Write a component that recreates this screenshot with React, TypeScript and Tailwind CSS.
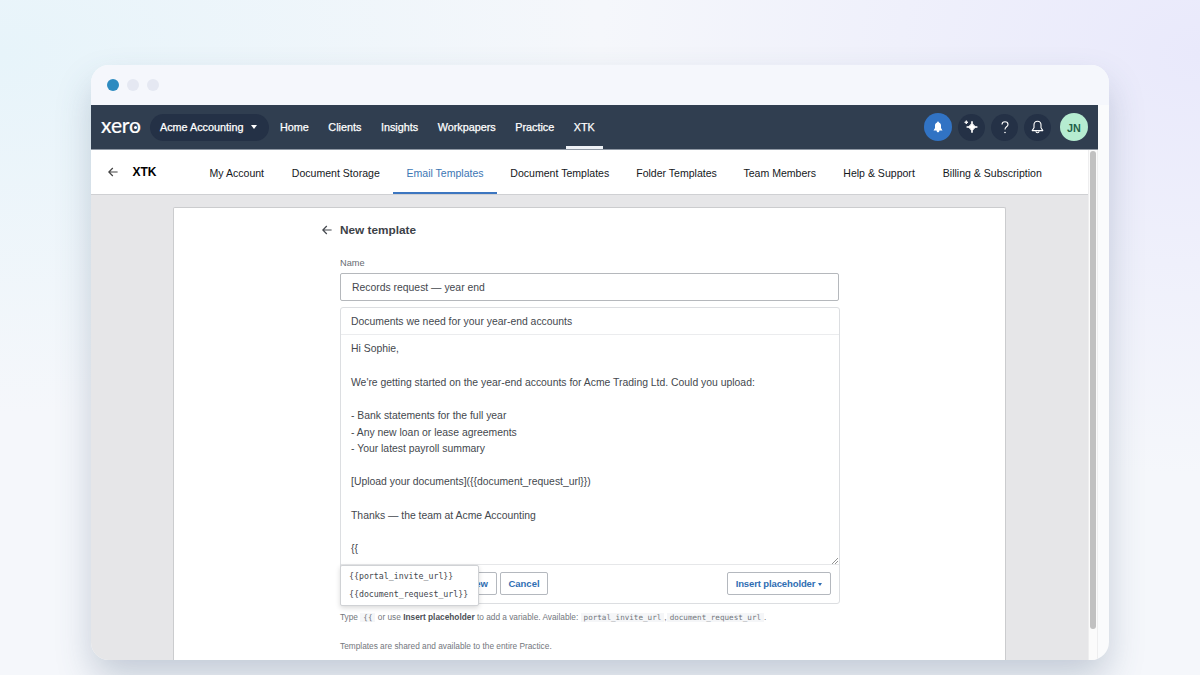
import React from "react";
import clsx from "clsx";

const navItems = ["Home", "Clients", "Insights", "Workpapers", "Practice", "XTK"];

const tabs = [
  { label: "My Account", width: "w-[83px]" },
  { label: "Document Storage", width: "w-[115px]" },
  { label: "Email Templates", width: "w-[103.5px]", active: true },
  { label: "Document Templates", width: "w-[126px]" },
  { label: "Folder Templates", width: "w-[107.5px]" },
  { label: "Team Members", width: "w-[99px]" },
  { label: "Help & Support", width: "w-[99.5px]" },
  { label: "Billing & Subscription", width: "w-[127px]" },
];

const body = `Hi Sophie,

We're getting started on the year-end accounts for Acme Trading Ltd. Could you upload:

- Bank statements for the full year
- Any new loan or lease agreements
- Your latest payroll summary

[Upload your documents]({{document_request_url}})

Thanks — the team at Acme Accounting

{{`;

const BackArrow = ({ className }: { className?: string }) => (
  <svg
    viewBox="0 0 10 10"
    className={clsx("h-[10px] w-[10px] fill-none stroke-current", className)}
  >
    <path d="M9.6 5H1M4.8 1L0.8 5l4 4" strokeWidth="1.2" />
  </svg>
);

const TopBar = () => {
  return (
    <header className="flex h-[45px] items-center border-b border-[#8f98a4] bg-[#303e50] pr-[10px] pl-[10px] text-[10.8px] text-white">
      <div className="relative w-[40px] font-['Lato'] text-[21px] leading-[24px] tracking-[-0.1px]">
        <span className="relative -top-[2.5px] inline-block [-webkit-text-stroke:0.2px_white]">
          xero
        </span>
        <span className="absolute top-[11px] left-[33px] h-[2.5px] w-[2.5px] rounded-full bg-white" />
      </div>

      <div className="ml-[9px] flex h-[27px] w-[119px] items-center gap-[8px] rounded-full bg-[#243146] pl-[10px] [-webkit-text-stroke:0.25px]">
        <span>Acme Accounting</span>
        <span className="h-0 w-0 border-x-[3.5px] border-t-[4px] border-x-transparent border-t-white" />
      </div>

      <nav className="ml-[3px] flex h-full">
        {navItems.map((item) => (
          <a
            key={item}
            className={clsx(
              "mr-[3.55px] flex h-[44px] items-center border-b-[3px] px-[8px] pt-[3px] [-webkit-text-stroke:0.25px]",
              item === "XTK" ? "border-[#eef1f6]" : "border-transparent"
            )}
          >
            {item}
          </a>
        ))}
      </nav>

      {/* Actions */}
      <div className="ml-auto flex items-center gap-[6px]">
        <span className="flex h-[28px] w-[28px] items-center justify-center rounded-full bg-[#3173c4]">
          <svg viewBox="0 0 12 12" className="h-[12px] w-[12px] fill-white">
            <path d="M6 0.5c.6 0 .9.4.9.9C8.4 1.9 9 3 9 4.5v2.6l1.5 2.3H1.5L3 7.1V4.5C3 3 3.6 1.9 5.1 1.4c0-.5.3-.9.9-.9zM4.6 9.4h2.8c0 1.2-.5 1.8-1.4 1.8s-1.4-.6-1.4-1.8z" />
          </svg>
        </span>
        <span className="flex h-[27px] w-[27px] items-center justify-center rounded-full bg-[#243146] pr-[2px]">
          <svg
            viewBox="0 0 14 14"
            className="h-[14px] w-[14px] fill-white stroke-white"
          >
            <path
              d="M8 1.2Q8.6 6.4 13.4 7 8.6 7.6 8 12.8 7.4 7.6 2.6 7 7.4 6.4 8 1.2z"
              strokeWidth="0.9"
            />
            <path
              d="M2.3.6l.5 1.2 1.2.5-1.2.5-.5 1.2-.5-1.2L.6 2.3l1.2-.5z"
              strokeWidth="0.8"
            />
          </svg>
        </span>
        <span className="flex h-[27px] w-[27px] items-center justify-center rounded-full bg-[#243146]">
          <svg viewBox="0 0 8 13" className="h-[13px] w-[8px] fill-none stroke-white">
            <path
              d="M1 3.6C1 1.8 2.2.8 4 .8s3 1 3 2.6c0 2.4-3 2.4-3 5"
              strokeWidth="1.1"
            />
            <circle cx="4" cy="11.5" r="0.8" className="fill-white stroke-none" />
          </svg>
        </span>
        <span className="flex h-[27px] w-[27px] items-center justify-center rounded-full bg-[#243146]">
          <svg viewBox="0 0 13 14" className="h-[14px] w-[13px] fill-none stroke-white">
            <path
              d="M6.5 1.3c-2.3 0-3.5 1.6-3.5 3.5v3L1.2 10.6h10.6L10 7.8v-3c0-1.9-1.2-3.5-3.5-3.5z"
              strokeWidth="1.1"
              strokeLinejoin="round"
            />
            <path d="M4.9 11.2c.2 2 3 2 3.2 0" strokeWidth="1.1" />
          </svg>
        </span>
        <span className="ml-[3px] flex h-[28px] w-[28px] items-center justify-center rounded-full bg-[#b5ecd0] pt-[2px] text-[10.8px] font-bold text-[#22614a]">
          JN
        </span>
      </div>
    </header>
  );
};

const Tabs = () => {
  return (
    <div className="flex h-[45px] items-center border-b border-[#cfd0d3] bg-white pl-[17px] text-[#15181c]">
      <BackArrow className="text-[#444]" />
      <h1 className="ml-[14.5px] w-[62.8px] text-[12px] font-bold text-black">
        XTK
      </h1>
      {tabs.map((tab) => (
        <a
          key={tab.label}
          className={clsx(
            "flex h-[44px] shrink-0 items-center justify-center border-b-2 pt-[5px] text-[10.55px] whitespace-nowrap",
            tab.width,
            tab.active
              ? "border-[#3c76c0] text-[#3c76b4]"
              : "border-transparent"
          )}
        >
          {tab.label}
        </a>
      ))}
    </div>
  );
};

const Button = ({
  children,
  className,
}: {
  children: React.ReactNode;
  className?: string;
}) => (
  <button
    className={clsx(
      "flex h-[23px] items-center rounded-[2px] border border-[#b4b8be] bg-white pt-[2px] text-[9.5px] font-bold text-[#2f6eb3]",
      className
    )}
  >
    {children}
  </button>
);

const TemplateForm = () => {
  return (
    <main className="ml-[82px] h-[453px] w-[833px] rounded-t-[2px] border border-b-0 border-[#cbccce] bg-white text-[#44484e]">
      <div className="ml-[148px] flex h-[22px] items-center pt-[21px]">
        <BackArrow />
        <h2 className="ml-[8px] text-[11.8px] leading-[16px] font-bold text-[#3d4147]">
          New template
        </h2>
      </div>

      <div className="ml-[166px] w-[500px] pt-[27px]">
        <label className="block text-[9.2px] leading-[13px] text-[#666a70]">
          Name
        </label>
        <div className="mt-[3px] flex h-[28px] w-[499px] items-center rounded-[2px] border border-[#b5b8bc] pt-[2px] pl-[11px] text-[10.4px]">
          Records request — year end
        </div>

        <div className="relative mt-[6px] h-[297px] rounded-[3px] border border-[#dcdee1]">
          <div className="flex h-[27px] items-center border-b border-[#ebecee] pt-[2px] pl-[10px] text-[10.4px]">
            Documents we need for your year-end accounts
          </div>
          <div className="relative h-[230px] border-b border-[#e6e7e9] pt-[6.4px] pl-[10px] text-[10.4px] leading-[16.62px] whitespace-pre">
            {body}
            <svg
              viewBox="0 0 6 6"
              className="absolute right-px bottom-0 h-[6px] w-[6px] stroke-[#777]"
            >
              <path d="M0 6L6 0M3 6l3-3" strokeWidth="0.8" />
            </svg>
          </div>
          <div className="flex pt-[7px] pr-[8px] pl-[104px]">
            <Button className="w-[52px] justify-end pr-[8px]">Preview</Button>
            <Button className="ml-[3px] w-[48px] justify-center">Cancel</Button>
            <Button className="ml-auto w-[104px] justify-center gap-[3px]">
              <span className="tracking-[-0.12px]">Insert placeholder</span>
              <span className="h-0 w-0 border-x-[2.5px] border-t-[3px] border-x-transparent border-t-[#2f6eb3]" />
            </Button>
          </div>

          {/* Placeholder suggestions */}
          <ul className="absolute top-[257px] -left-px h-[41px] w-[139px] rounded-[2px] border border-[#d0d2d5] bg-white pt-[2px] pl-[8px] font-['DejaVu_Sans_Mono'] text-[8.25px] leading-[17.5px] shadow-[0_2px_5px_rgba(0,0,0,0.15)]">
            <li>{"{{portal_invite_url}}"}</li>
            <li>{"{{document_request_url}}"}</li>
          </ul>
        </div>

        <p className="mt-[6px] text-[8.3px] leading-[14px] whitespace-nowrap text-[#73777d]">
          Type{" "}
          <code className="bg-[#f5f6f8] px-[3px] font-['DejaVu_Sans_Mono'] text-[7.6px]">
            {"{{"}
          </code>{" "}
          or use <b className="text-[#4c5056]">Insert placeholder</b> to add a
          variable. Available:{" "}
          <code className="bg-[#f5f6f8] px-[3px] font-['DejaVu_Sans_Mono'] text-[7.6px]">
            portal_invite_url
          </code>
          ,
          <code className="bg-[#f5f6f8] px-[3px] font-['DejaVu_Sans_Mono'] text-[7.6px]">
            document_request_url
          </code>
          .
        </p>
        <p className="mt-[14px] text-[8.3px] leading-[14px] text-[#73777d]">
          Templates are shared and available to the entire Practice.
        </p>
      </div>
    </main>
  );
};

const App = () => {
  return (
    <div className="h-[675px] w-[1200px] overflow-hidden bg-[#f5f7fb] bg-[radial-gradient(ellipse_600px_360px_at_0%_8%,#e7f4fa,transparent),radial-gradient(ellipse_600px_420px_at_100%_8%,#e9e9fb,transparent)] pt-[65px] pl-[91px] font-['Liberation_Sans',Arial,sans-serif]">
      <div className="h-[595px] w-[1018px] overflow-hidden rounded-[18px] bg-[#fafbfc] shadow-[0_18px_36px_-2px_rgba(60,85,120,0.28)]">
        <div className="flex h-[40px] items-center gap-[8px] bg-[#f5f7fc] pl-[16px]">
          <span className="h-[12px] w-[12px] rounded-full bg-[#2d8bc0]" />
          <span className="h-[12px] w-[12px] rounded-full bg-[#e5e8f2]" />
          <span className="h-[12px] w-[12px] rounded-full bg-[#e5e8f2]" />
        </div>

        <div className="w-[1007px]">
          <TopBar />
          <div className="flex">
            <div className="h-[510px] w-[997px] bg-[#e6e6e8]">
              <Tabs />
              <div className="pt-[12px]">
                <TemplateForm />
              </div>
            </div>
            {/* Scrollbar */}
            <div className="h-[510px] w-[10px] border-x border-[#eeeeef] bg-[#fbfbfb] pt-[1px] pl-[1px]">
              <div className="h-[478px] w-[6px] rounded-full bg-[#c1c1c1]" />
            </div>
          </div>
        </div>
      </div>
    </div>
  );
};

export default App;
